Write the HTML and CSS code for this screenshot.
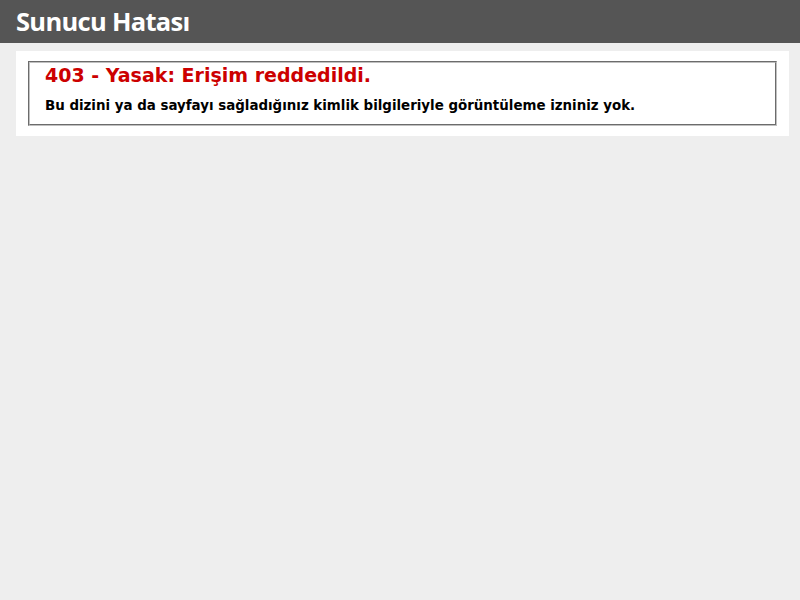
FILE: index.html
```html
<!DOCTYPE html>
<html lang="tr">
<head>
<meta charset="utf-8">
<title>403 - Yasak: Erişim reddedildi.</title>
<link rel="stylesheet" href="styles.css">
</head>
<body>
<div class="header"><h1 class="title">Sunucu Hatası</h1></div>
<div class="content">
  <div class="content-container">
    <fieldset class="box">
      <h2 class="error-title">403 - Yasak: Erişim reddedildi.</h2>
      <h3 class="error-text">Bu dizini ya da sayfayı sağladığınız kimlik bilgileriyle görüntüleme izniniz yok.</h3>
    </fieldset>
  </div>
</div>
</body>
</html>
```

FILE: styles.css
```css
html, body {
  margin: 0;
  padding: 0;
}
body {
  font-size: 11.2px;
  font-family: "DejaVu Sans", Verdana, sans-serif;
  background: #eeeeee;
}
.header {
  height: 31px;
  padding: 6px 16px;
  background-color: #555555;
  color: #ffffff;
  display: flex;
  align-items: center;
}
.title {
  margin: 0;
  font-family: "Open Sans", "Noto Sans", sans-serif;
  font-size: 25.5px;
  font-weight: 700;
  letter-spacing: -0.7px;
  color: #ffffff;
  line-height: 31px;
}
.content {
  margin: 0 0 0 16px;
}
.content-container {
  background: #ffffff;
  width: 753px;
  margin-top: 8px;
  padding: 10px;
}
.box {
  margin: 0 2px;
  padding: 0 15px 10px 15px;
  border: 2px groove #c0c0c0;
  min-width: 0;
}
.error-title {
  font-size: 19px;
  line-height: 24px;
  margin: 0;
  color: #cc0000;
  font-weight: bold;
}
.error-text {
  font-size: 13.4px;
  line-height: 16px;
  margin: 11px 0 0 0;
  color: #000000;
  font-weight: bold;
}
```
